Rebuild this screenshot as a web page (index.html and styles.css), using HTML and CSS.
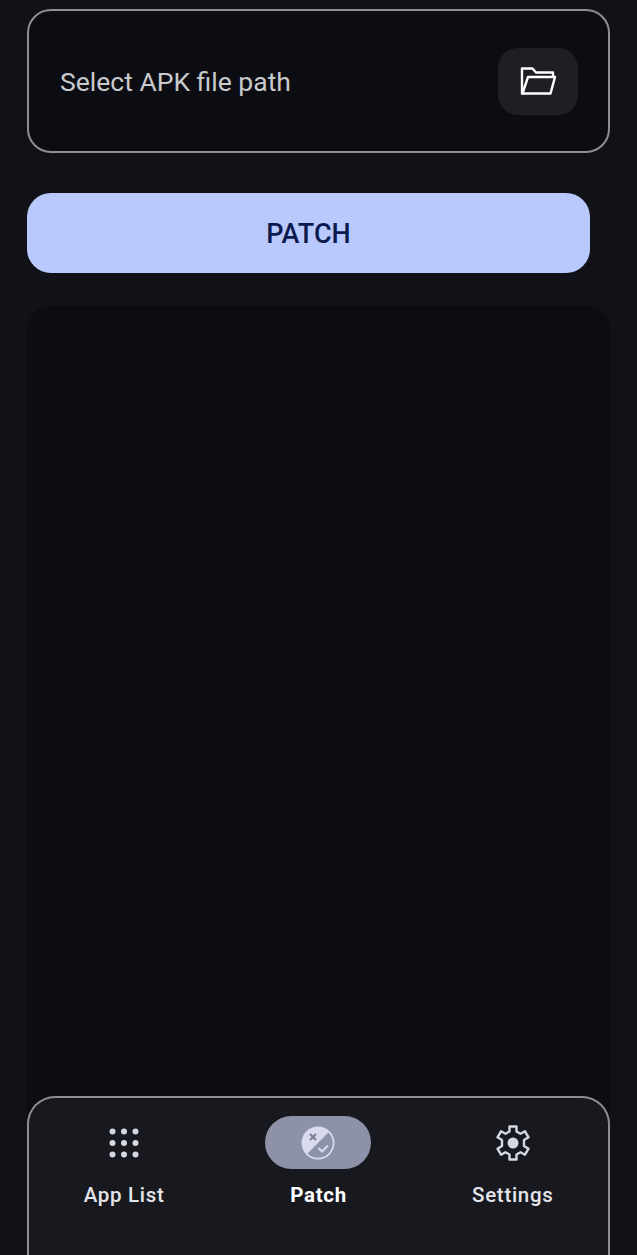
FILE: index.html
```html
<!DOCTYPE html>
<html>
  <head>
    <meta charset="UTF-8">
    <title>Patch</title>
    <link rel="stylesheet" href="styles.css">
  </head>
  <body>
    <div class="screen">
      <div class="path-field">
        <span class="path-label">Select APK file path</span>
        <div class="folder-btn">
          <svg width="38" height="30" viewBox="0 0 38 30" fill="none" stroke="#fff" stroke-width="2.4" stroke-linejoin="round" stroke-linecap="round">
            <path d="M3 27.500V2.500H13.500L17 6.500H34V10"/>
            <path d="M9 11H36L31.500 27.500H3.500Z"/>
          </svg>
        </div>
      </div>

      <button class="patch-btn">PATCH</button>

      <div class="log-panel"></div>

      <div class="bottom-nav">
        <div class="nav-item">
          <div class="nav-icon">
            <svg width="30" height="30" viewBox="0 0 30 30" fill="#d5d7e3">
              <circle cx="3.500" cy="3.500" r="3"/><circle cx="15" cy="3.500" r="3"/><circle cx="26.500" cy="3.500" r="3"/>
              <circle cx="3.500" cy="15" r="3"/><circle cx="15" cy="15" r="3"/><circle cx="26.500" cy="15" r="3"/>
              <circle cx="3.500" cy="26.500" r="3"/><circle cx="15" cy="26.500" r="3"/><circle cx="26.500" cy="26.500" r="3"/>
            </svg>
          </div>
          <span class="nav-label">App List</span>
        </div>
        <div class="nav-item active">
          <div class="nav-icon pill">
            <svg width="34" height="34" viewBox="0 0 34 34">
              <circle cx="17" cy="17" r="16.500" fill="#d8dbee"/>
              <path d="M27.400 6.600A14.700 14.700 0 0 1 6.600 27.400Z" fill="#8e92a8"/>
              <path d="M9 8L15 14M15 8L9 14" stroke="#7d8196" stroke-width="2.200" fill="none"/>
              <path d="M17.500 22L21 25.500L27 19.500" stroke="#d8dbee" stroke-width="2" fill="none"/>
            </svg>
          </div>
          <span class="nav-label">Patch</span>
        </div>
        <div class="nav-item">
          <div class="nav-icon">
            <svg width="34" height="36" viewBox="0 0 34 36" fill="none">
              <path d="M13.500 1.500H20.500V6.500L24.500 8.800L29 6.300L32.500 12.300L28 15V21L32.500 23.700L29 29.700L24.500 27.200L20.500 29.500V34.500H13.500V29.500L9.500 27.200L5 29.700L1.500 23.700L6 21V15L1.500 12.300L5 6.300L9.500 8.800L13.500 6.500Z" stroke="#d5d7e3" stroke-width="2.400" stroke-linejoin="round"/>
              <circle cx="17" cy="18" r="5.500" fill="#d5d7e3"/>
            </svg>
          </div>
          <span class="nav-label">Settings</span>
        </div>
      </div>
    </div>
  </body>
</html>
```

FILE: styles.css
```css
html, body {
    margin: 0;
    height: 100%;
}

body {
    background-color: #111218;
    font-family: Roboto, "Liberation Sans", sans-serif;
}

.screen {
    position: relative;
    height: 1255px;
    overflow: hidden;
    box-sizing: border-box;
    padding: 9px 27px 0;
    display: flex;
    flex-direction: column;
}

.path-field {
    height: 144px;
    flex-shrink: 0;
    box-sizing: border-box;
    background: #0c0d12;
    border: 2px solid #8d8f95;
    border-radius: 24px;
    padding: 0 30px 0 31px;
    display: flex;
    align-items: center;
    justify-content: space-between;
}

.path-label {
    font-size: 26.500px;
    color: #c9cacd;
}

.folder-btn {
    width: 80px;
    height: 67px;
    border-radius: 20px;
    background: #1e1f24;
    display: flex;
    align-items: center;
    justify-content: center;
}

.patch-btn {
    width: 563px;
    height: 80px;
    flex-shrink: 0;
    margin-top: 40px;
    padding: 2px 0 0;
    border: none;
    border-radius: 24px;
    background: #b9c9fd;
    color: #0b1a4e;
    font-family: inherit;
    font-size: 27px;
    font-weight: 500;
}

.log-panel {
    flex: 1;
    margin-top: 33px;
    border-radius: 24px 24px 0 0;
    background: #0c0d12;
}

.bottom-nav {
    position: absolute;
    left: 27px;
    right: 27px;
    top: 1096px;
    bottom: -30px;
    box-sizing: border-box;
    background: #18191f;
    box-shadow: inset 0 0 0 2px #8d8f95;
    border-radius: 28px;
    padding-top: 20px;
    display: flex;
}

.nav-item {
    flex: 1;
    display: flex;
    flex-direction: column;
    align-items: center;
    gap: 14px;
}

.nav-icon {
    width: 106px;
    height: 53px;
    border-radius: 27px;
    display: flex;
    align-items: center;
    justify-content: center;
}

.nav-icon.pill {
    background: #8e92a8;
}

.nav-label {
    font-size: 20.500px;
    font-weight: 500;
    letter-spacing: 0.700px;
    color: #e4e5ea;
}

.active .nav-label {
    font-weight: 700;
    color: #fff;
}
```
